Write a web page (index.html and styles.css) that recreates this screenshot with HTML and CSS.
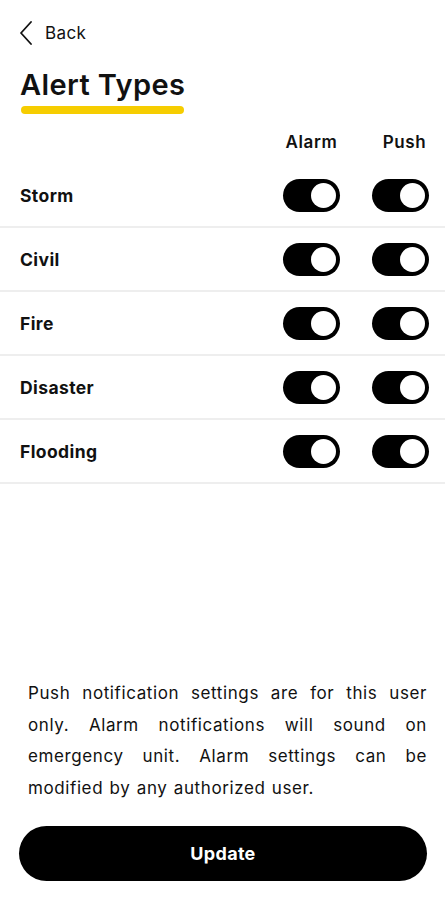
FILE: index.html
```html
<!DOCTYPE html>
<html lang="en">
<head>
  <meta charset="UTF-8" />
  <meta name="viewport" content="width=device-width, initial-scale=1" />
  <title>Alert Types</title>
  <link rel="stylesheet" href="styles.css">
</head>
<body>
  <main class="screen">
    <a href="#" class="back-link">
      <svg class="back-icon" width="14" height="24" viewBox="0 0 14 24" aria-hidden="true">
        <path d="M12 1 L2 12 L12 23" fill="none" stroke="#111" stroke-width="1.8" stroke-linecap="round" stroke-linejoin="round"/>
      </svg>
      <span>Back</span>
    </a>

    <h1 class="title">Alert Types</h1>

    <section class="alerts">
      <div class="alert-row alert-head">
        <span></span>
        <span class="col-label">Alarm</span>
        <span class="col-label col-push">Push</span>
      </div>

      <div class="alert-row">
        <span class="alert-name">Storm</span>
        <button class="toggle is-on" aria-label="Storm alarm"></button>
        <button class="toggle is-on" aria-label="Storm push"></button>
      </div>
      <div class="alert-row">
        <span class="alert-name">Civil</span>
        <button class="toggle is-on" aria-label="Civil alarm"></button>
        <button class="toggle is-on" aria-label="Civil push"></button>
      </div>
      <div class="alert-row">
        <span class="alert-name">Fire</span>
        <button class="toggle is-on" aria-label="Fire alarm"></button>
        <button class="toggle is-on" aria-label="Fire push"></button>
      </div>
      <div class="alert-row">
        <span class="alert-name">Disaster</span>
        <button class="toggle is-on" aria-label="Disaster alarm"></button>
        <button class="toggle is-on" aria-label="Disaster push"></button>
      </div>
      <div class="alert-row">
        <span class="alert-name">Flooding</span>
        <button class="toggle is-on" aria-label="Flooding alarm"></button>
        <button class="toggle is-on" aria-label="Flooding push"></button>
      </div>
    </section>

    <p class="note">Push notification settings are for this user only. Alarm notifications will sound on emergency unit. Alarm settings can be modified by any authorized user.</p>

    <button class="update-btn" type="button">Update</button>
  </main>
</body>
</html>
```

FILE: styles.css
```css
body {
  margin: 0;
  padding: 0;
  background: #fff;
  color: #111;
  font-family: Inter, "Open Sans", sans-serif;
}
.screen {
  min-height: 100vh;
  display: flex;
  flex-direction: column;
  box-sizing: border-box;
  padding-bottom: 19px;
}
.back-link {
  display: flex;
  align-items: center;
  gap: 12px;
  margin: 21px 0 0 19px;
  color: #111;
  text-decoration: none;
  font-size: 17px;
  letter-spacing: 0.4px;
}
.back-icon {
  display: block;
}
.title {
  align-self: flex-start;
  margin: 23px 0 0 20px;
  padding-bottom: 4px;
  font-size: 29px;
  font-weight: 600;
  letter-spacing: 0.4px;
  line-height: 34px;
}
.title::after {
  content: "";
  display: block;
  height: 8px;
  margin: 4px 1px 0;
  border-radius: 4px;
  background: #f6cd00;
}
.alerts {
  margin-top: 2px;
}
.alert-row {
  display: grid;
  grid-template-columns: 1fr 57px 57px;
  column-gap: 32px;
  align-items: center;
  padding: 0 16px 0 20px;
  height: 62px;
  border-bottom: 2px solid #eeeeee;
}
.alert-head {
  height: 44px;
  border-bottom: none;
}
.col-label {
  justify-self: center;
  white-space: nowrap;
  font-size: 17px;
  font-weight: 600;
  letter-spacing: 0.6px;
}
.col-push {
  margin-left: 8px;
}
.alert-name {
  font-size: 17.5px;
  font-weight: 700;
  letter-spacing: 0.4px;
}
.toggle {
  position: relative;
  width: 57px;
  height: 33px;
  padding: 0;
  border: none;
  border-radius: 17px;
  background: #000;
  cursor: pointer;
}
.toggle::after {
  content: "";
  position: absolute;
  top: 4px;
  left: 4px;
  width: 25px;
  height: 25px;
  border-radius: 50%;
  background: #fff;
}
.toggle.is-on::after {
  left: 28px;
}
.note {
  margin: auto 18px 0 28px;
  font-size: 17px;
  letter-spacing: 0.6px;
  word-spacing: 1px;
  line-height: 31.5px;
  text-align: justify;
}
.update-btn {
  margin: 22px 18px 0 19px;
  height: 55px;
  border: none;
  border-radius: 28px;
  background: #000;
  color: #fff;
  font-family: inherit;
  font-size: 18px;
  font-weight: 700;
  letter-spacing: 0.3px;
  cursor: pointer;
}
```
